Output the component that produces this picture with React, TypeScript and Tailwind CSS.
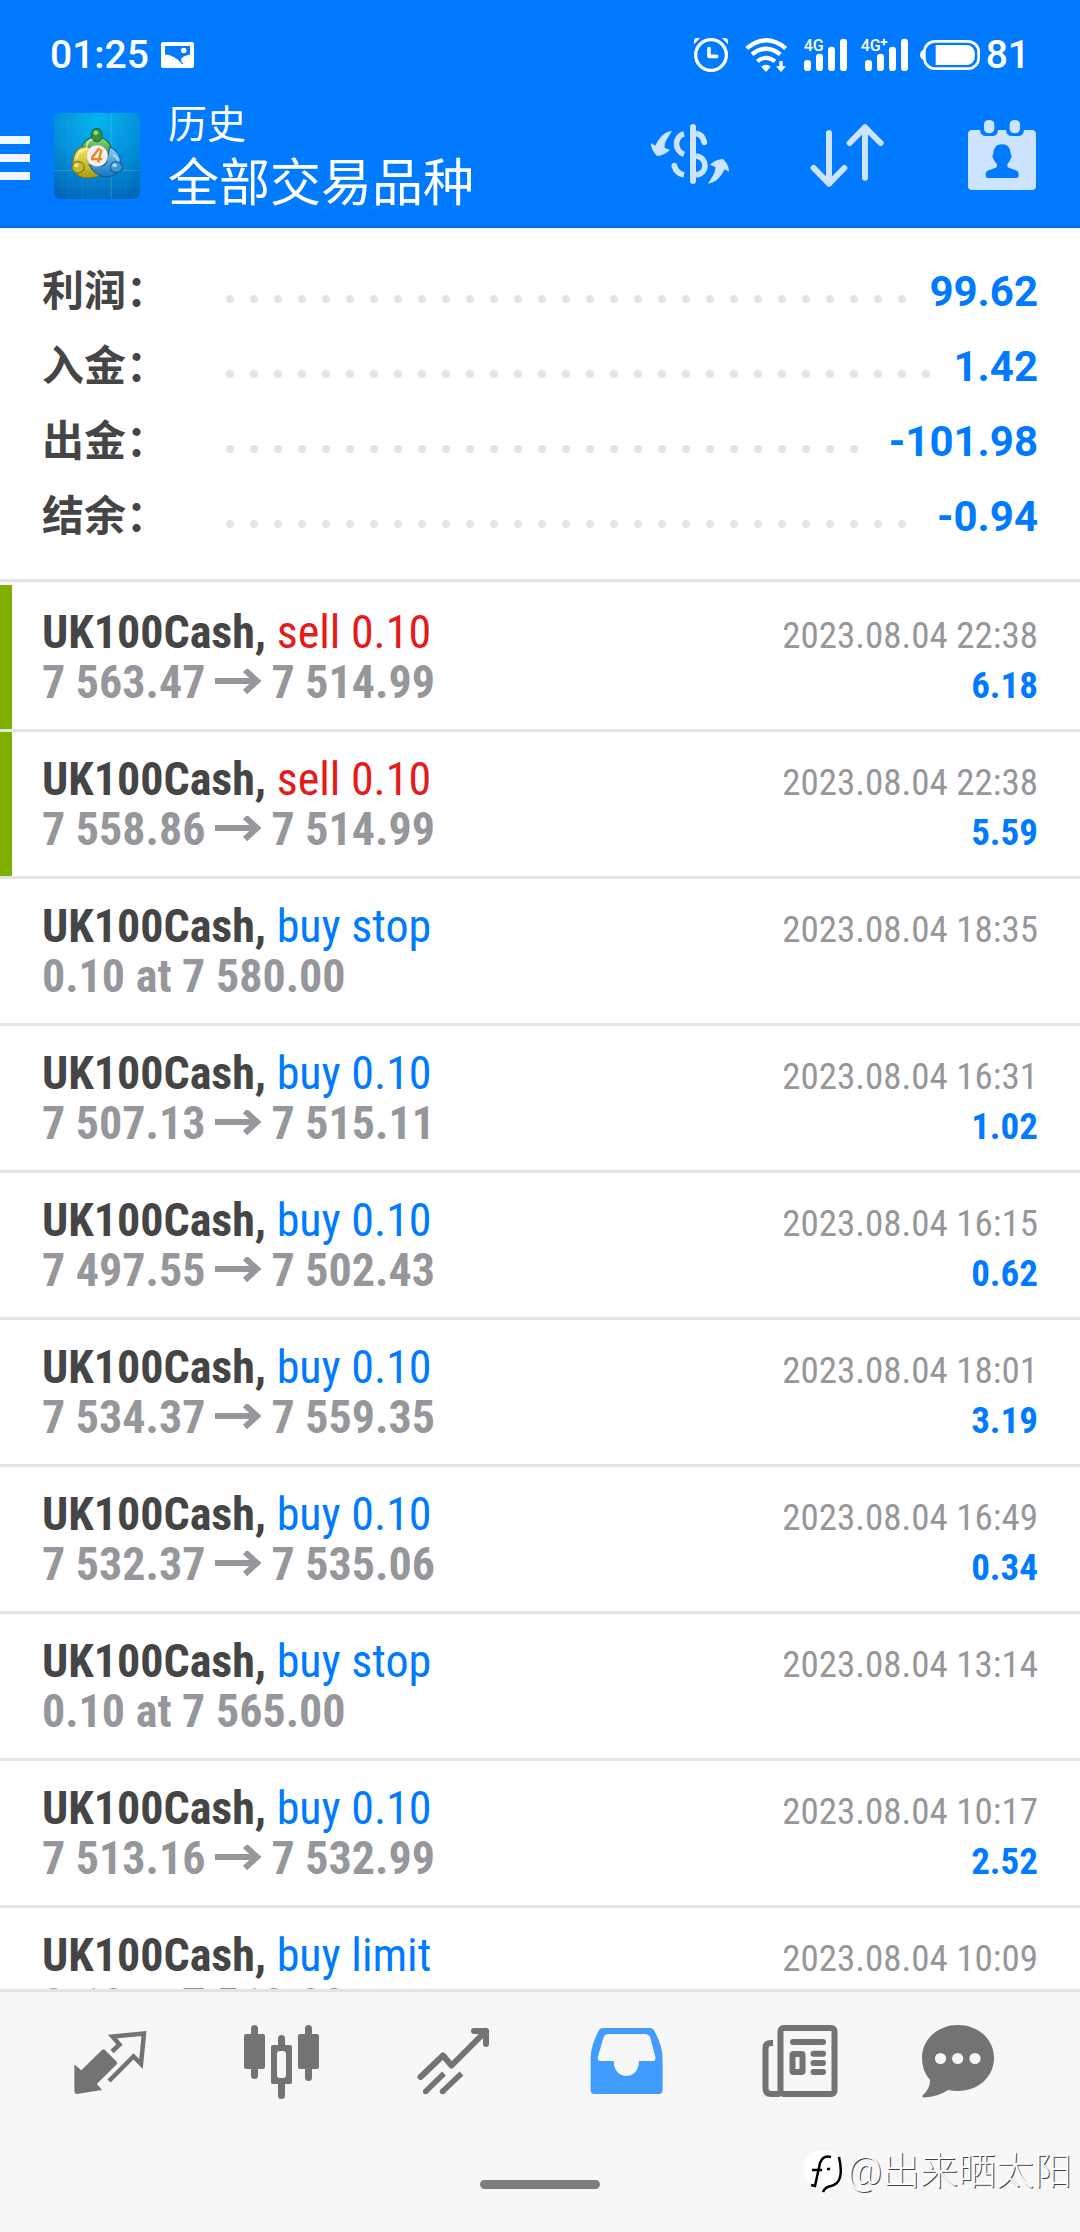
import type { ReactNode } from "react";

const summary = [
  { label: "利润：", value: "99.62" },
  { label: "入金：", value: "1.42" },
  { label: "出金：", value: "-101.98" },
  { label: "结余：", value: "-0.94" },
];

type Deal = {
  action: string;
  sell?: boolean;
  marked?: boolean;
  from?: string;
  to?: string;
  order?: string;
  time: string;
  profit?: string;
};

const deals: Deal[] = [
  { action: "sell 0.10", sell: true, marked: true, from: "7 563.47", to: "7 514.99", time: "2023.08.04 22:38", profit: "6.18" },
  { action: "sell 0.10", sell: true, marked: true, from: "7 558.86", to: "7 514.99", time: "2023.08.04 22:38", profit: "5.59" },
  { action: "buy stop", order: "0.10 at 7 580.00", time: "2023.08.04 18:35" },
  { action: "buy 0.10", from: "7 507.13", to: "7 515.11", time: "2023.08.04 16:31", profit: "1.02" },
  { action: "buy 0.10", from: "7 497.55", to: "7 502.43", time: "2023.08.04 16:15", profit: "0.62" },
  { action: "buy 0.10", from: "7 534.37", to: "7 559.35", time: "2023.08.04 18:01", profit: "3.19" },
  { action: "buy 0.10", from: "7 532.37", to: "7 535.06", time: "2023.08.04 16:49", profit: "0.34" },
  { action: "buy stop", order: "0.10 at 7 565.00", time: "2023.08.04 13:14" },
  { action: "buy 0.10", from: "7 513.16", to: "7 532.99", time: "2023.08.04 10:17", profit: "2.52" },
  { action: "buy limit", order: "0.10 at 7 510.00", time: "2023.08.04 10:09" },
];

function StatusBar() {
  return (
    <div className="flex h-[94px] items-center justify-between pt-4 pr-[50px] pl-[50px] text-[39px] leading-[48px] font-medium text-white">
      <div className="flex items-center gap-3">
        <span>01:25</span>
        <svg width="33" height="26" viewBox="0 0 33 26" aria-hidden="true">
          <rect width="33" height="26" rx="2" fill="#fff" />
          <path d="M4 4H29V12.5Q21 14 20 17.500Q20 20 22.500 21.500L21 22Q14 13 4 12.500Z" fill="#007aff" />
          <circle cx="22.7" cy="8.500" r="2.800" fill="#fff" />
        </svg>
      </div>
      <div className="flex items-center gap-[6px]">
        <svg width="286" height="36" viewBox="282 108 858 108" fill="none" stroke="#fff" aria-hidden="true">
          <circle cx="333" cy="162" r="46" strokeWidth="10" />
          <path d="M327 143V166H350" strokeWidth="11" strokeLinecap="round" strokeLinejoin="round" />
          <path d="M282 130V117Q284 111 291 111H300ZM384 130V117Q382 111 375 111H366Z" fill="#fff" stroke="none" />
          <path d="M440 142Q498 94 557 142" strokeWidth="13" />
          <path d="M456 160Q498 126 541 160" strokeWidth="13" />
          <path d="M472 181Q498 160 525 181" strokeWidth="12" />
          <path d="M484 197Q498 186 512 197L498 213Z" fill="#fff" stroke="none" />
          <path d="M538 180H548V196H558L543 213L528 196H538Z" fill="#fff" stroke="none" />
          <g fill="#fff" stroke="none">
            <rect x="612" y="177" width="21" height="33" rx="10" />
            <rect x="648" y="158" width="21" height="52" rx="10" />
            <rect x="684" y="137" width="21" height="73" rx="10" />
            <rect x="720" y="113" width="21" height="97" rx="10" />
            <rect x="795" y="177" width="21" height="33" rx="10" />
            <rect x="831" y="158" width="21" height="52" rx="10" />
            <rect x="867" y="137" width="21" height="73" rx="10" />
            <rect x="903" y="113" width="21" height="97" rx="10" />
            <text x="611" y="150" fontSize="48">4G</text>
            <text x="782" y="150" fontSize="48">4G</text>
            <path d="M849 113H855V120H862V126H855V133H849V126H842V120H849Z" />
            <path d="M970 148H966Q960 154 960 162Q960 170 966 175H970Z" />
            <path d="M1007 132H1103Q1125 136 1125 162Q1125 188 1103 192H1007Z" />
          </g>
          <rect x="973" y="121" width="163" height="82" rx="32" strokeWidth="8" />
        </svg>
        <span>81</span>
      </div>
    </div>
  );
}

function AppLogo() {
  return (
    <svg width="86" height="86" viewBox="40 39 257 257" aria-label="MetaTrader 4" role="img">
      <defs>
        <radialGradient id="sky" cx=".5" cy="0.1" r="1">
          <stop offset="0" stopColor="#06b4ee" />
          <stop offset=".5" stopColor="#0390da" />
          <stop offset="1" stopColor="#0362b6" />
        </radialGradient>
        <linearGradient id="green" x2="0" y2="1">
          <stop offset="0" stopColor="#8fd67f" />
          <stop offset="1" stopColor="#23852c" />
        </linearGradient>
        <linearGradient id="yellow" x2="0" y2="1">
          <stop offset="0" stopColor="#f6ec5a" />
          <stop offset="1" stopColor="#a99a10" />
        </linearGradient>
        <linearGradient id="blue" x2="0" y2="1">
          <stop offset="0" stopColor="#8fd0f5" />
          <stop offset="1" stopColor="#1173bd" />
        </linearGradient>
      </defs>
      <rect x="40" y="39" width="257" height="257" rx="20" fill="url(#sky)" />
      <path d="M83 39V296M97 39V296M125 39V296M211 39V296M254 39V296M40 82H297M40 126H297M40 254H297" stroke="#5fc4f0" strokeOpacity=".15" strokeWidth="2" />
      <path d="M211 39V296M40 211H297" stroke="#8ad6f7" strokeOpacity=".25" strokeWidth="3" />
      <g strokeWidth="3">
        <path d="M214 160C214 200 190 170 168 170C146 170 123 180 123 150C123 96 214 96 214 160Z" fill="url(#green)" stroke="#1c6b2a" />
        <path d="M180 226C120 246 97 222 96 190C98 140 128 138 146 141Q160 190 180 226Z" fill="url(#yellow)" stroke="#7c7010" />
        <path d="M207 141C250 160 250 216 212 228C180 236 160 222 145 194Q180 204 196 190Z" fill="url(#blue)" stroke="#0d5a99" />
        <ellipse cx="168" cy="105" rx="16" ry="20" fill="#2f9440" stroke="#1c6b2a" />
        <ellipse cx="112" cy="201" rx="18" ry="17" fill="#c9b92a" stroke="#7c7010" />
        <ellipse cx="226" cy="201" rx="18" ry="16" fill="#3d97d3" stroke="#0d5a99" />
      </g>
      <ellipse cx="165" cy="98" rx="7" ry="7" fill="#90d894" />
      <ellipse cx="107" cy="195" rx="7" ry="6" fill="#f3ea85" />
      <ellipse cx="221" cy="195" rx="7" ry="6" fill="#a7dbf7" />
      <path d="M136 150Q138 120 156 118M107 178Q112 150 132 150M216 164Q230 172 231 182" fill="none" stroke="#fff" strokeOpacity=".6" strokeWidth="5" />
      <circle cx="169" cy="167" r="32" fill="#f1f1f4" stroke="#999" strokeOpacity=".5" strokeWidth="2" />
      <path d="M176 144L154 171V177H184M182 148L172 187" fill="none" stroke="#f08020" strokeWidth="7" />
    </svg>
  );
}

function Header() {
  return (
    <header className="shrink-0 border-b-[3px] border-[#0070ea] bg-[#007aff] pb-2">
      <StatusBar />
      <div className="flex h-[123px] items-center justify-between pr-11">
        <div className="flex items-center">
          <button type="button" aria-label="菜单" className="mr-6 flex w-[30px] flex-col gap-[10px] pt-1">
            <span className="h-2 bg-[#f0f7ff]" />
            <span className="h-2 bg-[#f0f7ff]" />
            <span className="h-2 bg-[#f0f7ff]" />
          </button>
          <AppLogo />
          <div className="ml-7 text-white">
            <p className="text-[39px] leading-[57px]">历史</p>
            <h1 className="text-[51px] leading-[60px]">全部交易品种</h1>
          </div>
        </div>
        <div className="flex items-center gap-20">
          <button type="button" aria-label="交易品种">
            <svg width="80" height="72" viewBox="150 360 240 216" fill="none" stroke="#cce4ff">
              <path d="M279 381V543" strokeWidth="18" strokeLinecap="round" />
              <path d="M252 401C222 410 222 452 252 463M288 467C324 474 324 520 288 525" strokeWidth="17" />
              <path d="M288 400Q308 403 313 427M252 525Q228 520 223 497" strokeWidth="17" />
              <g fill="#cce4ff" stroke="none">
                <circle cx="313" cy="427" r="8.500" />
                <circle cx="223" cy="497" r="8.500" />
                <path d="M216 393C200 418 193 428 194 443L210 450C200 458 190 466 171 468C160 455 153 445 153 429L166 437C178 412 192 396 216 393Z" />
                <path d="M324 551C340 526 347 516 346 501L330 494C340 486 350 478 369 477C380 489 387 499 387 515L374 508C362 532 348 548 324 551Z" />
              </g>
            </svg>
          </button>
          <button type="button" aria-label="排序">
            <svg width="74" height="72" viewBox="627 360 222 216" fill="none" stroke="#cce4ff" strokeWidth="18" strokeLinecap="round" strokeLinejoin="round">
              <path d="M684 399V551M638 504L684 551L730 504M792 533V382M746 429L792 382L839 429" />
            </svg>
          </button>
          <button type="button" aria-label="日期" className="ml-1">
            <svg width="68" height="72" viewBox="1104 360 204 216" fill="#cce4ff">
              <path d="M1116 390H1140Q1142 408 1158 408H1178Q1192 408 1194 390H1218Q1220 408 1236 408H1254Q1270 408 1272 390H1296Q1308 391 1308 402V558Q1308 570 1296 570H1116Q1104 570 1104 558V402Q1104 391 1116 390Z" />
              <rect x="1152" y="360" width="31" height="40" rx="14" />
              <rect x="1229" y="360" width="31" height="40" rx="14" />
              <path d="M1206 433C1226 433 1232 448 1232 463Q1238 468 1232 476Q1228 486 1222 492V500C1238 512 1256 506 1256 524Q1256 534 1248 534H1164Q1157 534 1157 524C1157 506 1176 512 1191 500V492Q1184 486 1180 476Q1174 468 1180 463C1180 448 1186 433 1206 433Z" fill="#007aff" />
            </svg>
          </button>
        </div>
      </div>
    </header>
  );
}

function Summary() {
  return (
    <dl className="shrink-0 border-b-[3px] border-[#e4e4e4] px-[42px] pt-[26px] pb-[25px] text-[42px] leading-[75px] font-bold">
      {summary.map((row) => (
        <div key={row.label} className="flex h-[75px] items-baseline">
          <dt className="w-44 shrink-0 text-[#454545]">{row.label}</dt>
          <dd className="flex flex-1 items-baseline justify-between text-[#007aff]">
            <span aria-hidden="true" className="flex h-[11px] flex-1 flex-wrap overflow-hidden">
              {Array.from({ length: 60 }, (_, i) => (
                <span key={i} className="h-[11px] w-6 px-2">
                  <span className="block size-2 rounded-full bg-[#e4e4e4]" />
                </span>
              ))}
            </span>
            <span>{row.value}</span>
          </dd>
        </div>
      ))}
    </dl>
  );
}

function DealRow({ deal }: { deal: Deal }) {
  return (
    <li className="flex h-[147px] border-b-[3px] border-[#e4e4e4]">
      <span className={deal.marked ? "w-3 bg-[#7fb000]" : "w-3"} />
      <div className="flex flex-1 flex-col pt-[22px] pr-[42px] pl-[30px] leading-[50px] text-[#96979b]">
        <div className="flex h-[50px] items-baseline justify-between">
          <p className="text-[46px]">
            <span className="font-bold text-[#454545]">UK100Cash,</span>{" "}
            <span className={deal.sell ? "text-[#e31b1b]" : "text-[#007aff]"}>{deal.action}</span>
          </p>
          <time className="text-[37px]">{deal.time}</time>
        </div>
        <div className="flex h-[50px] items-baseline justify-between font-bold">
          {deal.order ? (
            <p className="text-[46px]">{deal.order}</p>
          ) : (
            <p className="flex items-center gap-[10px] text-[46px]">
              {deal.from}
              <svg width="46" height="26" viewBox="0 0 46 26" fill="none" stroke="currentColor" strokeWidth="6" aria-label="至">
                <path d="M0 12H42M30 1L42 12L30 23" />
              </svg>
              {deal.to}
            </p>
          )}
          <p className="text-[37px] text-[#007aff]">{deal.profit}</p>
        </div>
      </div>
    </li>
  );
}

function NavItem({ label, active, children }: { label: string; active?: boolean; children: ReactNode }) {
  return (
    <button
      type="button"
      aria-label={label}
      aria-current={active ? "page" : undefined}
      className={active ? "flex flex-1 justify-center text-[#429bff]" : "flex flex-1 justify-center text-[#737373]"}
    >
      <svg width="100" height="84" viewBox="-8 0 100 84" fill="currentColor">
        {children}
      </svg>
    </button>
  );
}

function BottomNav() {
  return (
    <footer className="relative flex h-[243px] shrink-0 flex-col items-center justify-between border-t-[3px] border-[#e4e4e4] bg-[#f7f7f7] pt-[27px] pb-[43px]">
      <nav className="flex w-full px-6">
        <NavItem label="行情">
          <path d="M6.400 45.500L13.300 51.300L34 31Q35.300 29.500 37 31L48.500 42.500Q50 44 48.500 45.500L28.800 65L34 71L9 75Q6.400 75 6.400 72Z" />
          <path d="M43 38L51.500 25.500L51.500 25.500" />
          <path d="M44 32.500L51.500 25.500L44.500 17.500L76 14.500L73 45L65.500 37.500L41 62" fill="none" stroke="#f7f7f7" strokeWidth="10" />
          <path d="M44 32.500L51.500 25.500L44.500 17.500L76 14.500L73 45L65.500 37.500L41 62" fill="none" stroke="currentColor" strokeWidth="4.500" />
        </NavItem>
        <NavItem label="图表">
          <rect x="11" y="6" width="7" height="54" rx="3.500" />
          <rect x="4" y="15" width="21" height="35" rx="2" />
          <rect x="38" y="16" width="7" height="64" rx="3.500" />
          <rect x="31" y="26" width="21" height="39" rx="2" />
          <rect x="37" y="32" width="9" height="27" rx="3" fill="#f7f7f7" />
          <rect x="65" y="6" width="7" height="56" rx="3.500" />
          <rect x="58" y="15" width="21" height="35" rx="2" />
        </NavItem>
        <NavItem label="交易">
          <g fill="none" stroke="currentColor" strokeWidth="5.500">
            <path d="M8.500 58L31 36.500L39.500 46.500L74 12M62 12H74V25" strokeWidth="6" strokeLinecap="round" strokeLinejoin="round" />
            <path d="M13.600 72.500L32 54.500M30.500 72.500L49.500 54.500" />
          </g>
          <circle cx="13.600" cy="72.500" r="2.750" />
          <circle cx="30.500" cy="72.500" r="2.750" />
        </NavItem>
        <NavItem label="历史" active>
          <path
            fillRule="evenodd"
            d="M19 9H66q3 0 4.500 3Q78.600 27 78.600 40V71q0 4-4 4H10.600q-4 0-4-4V40Q6.600 27 14.500 12Q16 9 19 9ZM24.500 15H61q4 0 5.200 3.500L71.300 37.500q.8 4.500-2 4.500H55C55 62 29.700 62 29.700 42H16q-3.200 0-2-4.500L19.500 18.500q1-3.500 5-3.500Z"
          />
        </NavItem>
        <NavItem label="新闻">
          <g fill="none" stroke="currentColor" strokeWidth="6">
            <rect x="24.500" y="9" width="54" height="66" rx="3" />
            <path d="M17 24H15Q9.500 24 9.500 29V69Q9.500 75 15 75H24" />
            <path d="M37 23H67M57.500 34.700H67M57.500 44H67M57.500 53H67" strokeLinecap="round" />
            <rect x="36.500" y="35" width="10" height="18" rx="1" />
          </g>
        </NavItem>
        <NavItem label="消息">
          <path d="M30 6C50 6 66 20 66 39S50 72 30 72Q25 72 20 71Q10 78 -4 78.500Q-7 78 -5 76Q2 70 2 61Q-6 52 -6 39C-6 20 10 6 30 6Z" />
          <g fill="#f7f7f7">
            <circle cx="12.500" cy="39.500" r="5.600" />
            <circle cx="29.700" cy="39.500" r="5.600" />
            <circle cx="47" cy="39.500" r="5.600" />
          </g>
        </NavItem>
      </nav>
      <div className="h-[9px] w-[120px] rounded-full bg-[#7c7c7c]" />
      <div className="absolute right-2 bottom-[34px] flex items-center gap-1 text-[38px] leading-[54px] font-light text-white [text-shadow:1px_1px_0_#444]">
        <svg width="40" height="44" viewBox="0 0 40 44" aria-hidden="true">
          <path d="M12 2H26Q39 4 39 20Q39 35 28 37L20 43V37H12Q1 34 1 18Q2 4 12 2Z" fill="#fff" />
          <path d="M28 8Q20 6 17 14L12 37L8 36M9 21H19M24 20H27M36 8Q42 34 28 37Q22 38 20 43" fill="none" stroke="#000" strokeWidth="2.500" />
        </svg>
        <span>@出来晒太阳</span>
      </div>
    </footer>
  );
}

export default function App() {
  return (
    <div className="flex h-screen flex-col bg-white font-[Roboto,'Noto_Sans_CJK_SC',sans-serif]">
      <Header />
      <Summary />
      <main className="min-h-0 flex-1 overflow-hidden pt-[3px] font-['Roboto_Condensed','Liberation_Sans_Narrow',sans-serif]">
        <ul>
          {deals.map((deal, i) => (
            <DealRow key={i} deal={deal} />
          ))}
        </ul>
      </main>
      <BottomNav />
    </div>
  );
}
